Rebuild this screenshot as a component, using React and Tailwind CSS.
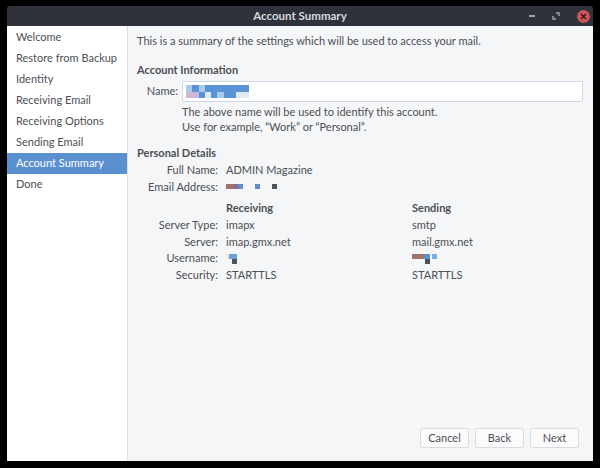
import React from "react";

const NAV = [
  "Welcome",
  "Restore from Backup",
  "Identity",
  "Receiving Email",
  "Receiving Options",
  "Sending Email",
  "Account Summary",
  "Done",
];

// pixelated redaction blocks
function Blocks({ cells, size = 5 }) {
  return (
    <span className="inline-flex flex-col align-middle">
      {cells.map((row, i) => (
        <span key={i} className="flex">
          {row.map((c, j) => (
            <span
              key={j}
              style={{ width: size, height: size, background: c || "transparent" }}
            />
          ))}
        </span>
      ))}
    </span>
  );
}

const B = "#5a93d6";
const L = "#a9cbee";
const P = "#cdb6d8";
const W = "#dfe9f6";

function Row({ label, children }) {
  return (
    <div className="flex items-center h-[16.5px] whitespace-nowrap">
      <span className="w-[81px] text-right shrink-0">{label}</span>
      <span className="ml-2 flex-1 flex items-center">{children}</span>
    </div>
  );
}

export default function App() {
  return (
    <div
      className="w-[600px] h-[468px] bg-black pl-[7px] pr-[7px] pt-[6px] pb-[7px] text-[11px] text-[#4b4f56] whitespace-nowrap"
      style={{ fontFamily: "Lato, 'Noto Sans', sans-serif" }}
    >
      <div className="h-full flex flex-col rounded-t-[3px] overflow-hidden">
        {/* title bar */}
        <div className="h-[20px] bg-[#2f323a] flex items-center relative shrink-0">
          <div className="flex-1 text-center text-[11.5px] font-bold text-[#d6d9de]">
            Account Summary
          </div>
          <div className="absolute right-[3px] top-0 h-full flex items-center gap-[17px]">
            <span className="w-[6px] h-[2px] bg-[#9ea3ab]" />
            <svg width="8" height="8" viewBox="0 0 8 8">
              <path d="M4 1h3v3M4 7H1V4" stroke="#9ea3ab" strokeWidth="1.5" fill="none" />
            </svg>
            <span className="w-[13px] h-[13px] rounded-full bg-[#d0545a] flex items-center justify-center">
              <svg width="7" height="7" viewBox="0 0 7 7">
                <path d="M1 1l5 5M6 1L1 6" stroke="#3a1a1c" strokeWidth="1.6" />
              </svg>
            </span>
          </div>
        </div>

        <div className="flex-1 flex min-h-0">
          {/* sidebar */}
          <div className="w-[121px] bg-white border-r border-[#dcdfe3] pt-[1px] shrink-0">
            {NAV.map((n) => (
              <div
                key={n}
                className={`h-[21px] flex items-center pl-[9px] ${
                  n === "Account Summary" ? "bg-[#5a8fd0] text-white" : ""
                }`}
              >
                {n}
              </div>
            ))}
          </div>

          {/* content */}
          <div className="flex-1 bg-[#f5f6f7] pl-[9px] pr-[10px] pt-[6px] pb-[13px] flex flex-col">
            <p className="h-[18px] flex items-center">
              This is a summary of the settings which will be used to access your mail.
            </p>

            <h3 className="mt-[12px] font-bold h-[16px] flex items-center">Account Information</h3>
            <div className="mt-[3px] flex items-center">
              <span className="w-[41px] text-right">Name:</span>
              <div className="ml-[4px] flex-1 h-[21px] bg-white border border-[#cfd6e6] rounded-[2px] flex items-center pl-[3px]">
                <Blocks
                  size={6.3}
                  cells={[
                    [L, B, L, B, B, B, B, B, B, B],
                    [P, P, B, W, B, L, B, B, W, W],
                  ]}
                />
              </div>
            </div>
            <div className="ml-[45px] mt-[2px] leading-[15px]">
              <div>The above name will be used to identify this account.</div>
              <div>Use for example, “Work” or “Personal”.</div>
            </div>

            <h3 className="mt-[11px] font-bold h-[16px] flex items-center">Personal Details</h3>
            <div className="mt-[1px]">
              <Row label="Full Name:">ADMIN Magazine</Row>
              <Row label="Email Address:">
                <span className="flex items-center">
                  <span className="w-[7px] h-[5px] bg-[#a0736e]" />
                  <span className="w-[5px] h-[5px] bg-[#8f6f86]" />
                  <span className="w-[5px] h-[5px] bg-[#5a8fd0]" />
                  <span className="w-[5px] h-[5px] bg-[#5a8fd0] ml-[12px]" />
                  <span className="w-[5px] h-[5px] bg-[#4f535c] ml-[12px]" />
                </span>
              </Row>
            </div>

            <div className="mt-[5px] flex flex-col">
              <div className="flex h-[17px] items-center">
                <span className="w-[89px]" />
                <span className="w-[186px] font-bold">Receiving</span>
                <span className="font-bold">Sending</span>
              </div>
              {[
                ["Server Type:", "imapx", "smtp"],
                ["Server:", "imap.gmx.net", "mail.gmx.net"],
                ["Username:", null, null],
                ["Security:", "STARTTLS", "STARTTLS"],
              ].map(([l, a, b]) => (
                <div key={l} className="flex h-[16.5px] items-center">
                  <span className="w-[81px] text-right">{l}</span>
                  <span className="w-[186px] ml-2 flex items-center">
                    {a ?? (
                      <span className="relative w-[20px] h-[12px]">
                        <span className="absolute left-0 top-[2px] w-[3px] h-[5px] bg-[#f4ecd0]" />
                        <span className="absolute left-[3px] top-[2px] w-[8px] h-[5px] bg-[#6ea1d8]" />
                        <span className="absolute left-[6px] top-[7px] w-[5px] h-[5px] bg-[#4f535c]" />
                      </span>
                    )}
                  </span>
                  <span className="flex items-center">
                    {b ?? (
                      <span className="relative w-[40px] h-[12px]">
                        <span className="absolute left-0 top-[2px] w-[12px] h-[5px] bg-[#a0736e]" />
                        <span className="absolute left-[12px] top-[2px] w-[6px] h-[5px] bg-[#5a8fd0]" />
                        <span className="absolute left-[20px] top-[2px] w-[5px] h-[5px] bg-[#7ab0e4]" />
                        <span className="absolute left-[13px] top-[7px] w-[5px] h-[5px] bg-[#4f535c]" />
                      </span>
                    )}
                  </span>
                </div>
              ))}
            </div>

            <div className="mt-auto mr-[4px] flex justify-end gap-[6px]">
              {["Cancel", "Back", "Next"].map((t) => (
                <button
                  key={t}
                  className="w-[49px] h-[20px] bg-[#fbfbfc] border border-[#d8dce3] rounded-[2px] text-[11px] text-[#4b4f56]"
                >
                  {t}
                </button>
              ))}
            </div>
          </div>
        </div>
      </div>
    </div>
  );
}
